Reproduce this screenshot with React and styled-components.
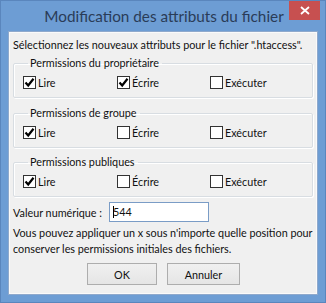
import React from 'react'
import styled, { createGlobalStyle } from 'styled-components'

const GlobalStyle = createGlobalStyle`
  html, body {
    margin: 0;
    padding: 0;
    background: #6b9bd2;
  }
  * {
    box-sizing: border-box;
  }
`

const Window = styled.div`
  width: 326px;
  height: 303px;
  display: flex;
  flex-direction: column;
  background: #6d9dd4;
  border: 1px solid #5a86bd;
  font-family: Lato, "Open Sans", sans-serif;
  font-size: 10.8px;
  color: #111;
  padding: 0 7px 7px 7px;
  overflow: hidden;
`

const TitleBar = styled.div`
  height: 30px;
  display: flex;
  align-items: center;
  justify-content: center;
  position: relative;
`

const Title = styled.div`
  font-size: 15.3px;
  color: #2a3c58;
  margin-left: 2px;
  white-space: nowrap;
`

const CloseButton = styled.div`
  position: absolute;
  top: -1px;
  right: -2px;
  width: 31px;
  height: 20px;
  background: #c75050;
  display: flex;
  align-items: center;
  justify-content: center;
`

const Client = styled.div`
  flex: 1;
  background: #f0f0f0;
  border: 1px solid #8fa9cc;
  box-shadow: inset 0 0 0 1px #fafafa;
  padding: 5px 4px 0 4px;
  display: flex;
  flex-direction: column;
  min-width: 0;
`

const Text = styled.div`
  line-height: 16px;
  white-space: nowrap;
`

const Group = styled.fieldset`
  margin: ${p => p.$top}px 0 0 0;
  padding: 3px 0 7px 9px;
  border: 1px solid #d8dde2;
  border-radius: 2px;
  box-shadow: inset 1px 1px 0 #fff, 1px 1px 0 #fff;
  min-width: 0;
  legend {
    padding: 0 3px 0 2px;
    margin-left: 5px;
    line-height: 16px;
  }
`

const CheckRow = styled.div`
  display: grid;
  grid-template-columns: 94px 93px 1fr;
  height: 16px;
  align-items: center;
`

const CheckItem = styled.label`
  display: flex;
  align-items: center;
  gap: 2px;
`

const Box = styled.span`
  width: 13px;
  height: 13px;
  background: #fff;
  border: 1px solid #333;
  display: flex;
  align-items: center;
  justify-content: center;
`

const ValueRow = styled.div`
  display: flex;
  align-items: center;
  margin-top: 5px;
  gap: 7px;
`

const Input = styled.div`
  width: 100px;
  height: 20px;
  background: #fff;
  border: 1px solid #7a9cc6;
  padding: 0 3px;
  display: flex;
  align-items: center;
  line-height: 16px;
  span {
    border-left: 1px solid #000;
    height: 12px;
    margin-right: -1px;
  }
`

const Info = styled.div`
  margin-top: 3px;
  line-height: 16px;
  white-space: nowrap;
`

const ButtonRow = styled.div`
  display: flex;
  justify-content: center;
  gap: 10px;
  margin-top: 6px;
  padding-left: 1px;
`

const Button = styled.div`
  width: ${p => p.$w}px;
  height: 22px;
  border: 1px solid #adadad;
  background: linear-gradient(#f0f0f0, #e5e5e5);
  display: flex;
  align-items: center;
  justify-content: center;
`

const Check = () => (
  <svg width="11" height="11" viewBox="0 0 11 11">
    <path d="M1.5 5.5 L4.2 8.5 L9.5 1.8" fill="none" stroke="#000" strokeWidth="2.2" />
  </svg>
)

const CheckBox = ({ label, checked }) => (
  <CheckItem>
    <Box>{checked && <Check />}</Box>
    {label}
  </CheckItem>
)

const groups = [
  { title: 'Permissions du propriétaire', values: [true, true, false], top: 2 },
  { title: 'Permissions de groupe', values: [true, false, false], top: 7 },
  { title: 'Permissions publiques', values: [true, false, false], top: 6 },
]

const labels = ['Lire', 'Écrire', 'Exécuter']

const App = () => {
  return (
    <>
      <GlobalStyle />
      <Window>
        <TitleBar>
          <Title>Modification des attributs du fichier</Title>
          <CloseButton>
            <svg width="10" height="9" viewBox="0 0 10 9">
              <path d="M1 1 L9 8 M9 1 L1 8" stroke="#fff" strokeWidth="1.8" />
            </svg>
          </CloseButton>
        </TitleBar>
        <Client>
          <Text>Sélectionnez les nouveaux attributs pour le fichier ".htaccess".</Text>
          {groups.map(g => (
            <Group key={g.title} $top={g.top}>
              <legend>{g.title}</legend>
              <CheckRow>
                {labels.map((l, i) => (
                  <CheckBox key={l} label={l} checked={g.values[i]} />
                ))}
              </CheckRow>
            </Group>
          ))}
          <ValueRow>
            <span>Valeur numérique :</span>
            <Input><span />544</Input>
          </ValueRow>
          <Info>
            Vous pouvez appliquer un x sous n'importe quelle position pour
            <br />
            conserver les permissions initiales des fichiers.
          </Info>
          <ButtonRow>
            <Button $w={70}>OK</Button>
            <Button $w={73}>Annuler</Button>
          </ButtonRow>
        </Client>
      </Window>
    </>
  )
}

export default App
